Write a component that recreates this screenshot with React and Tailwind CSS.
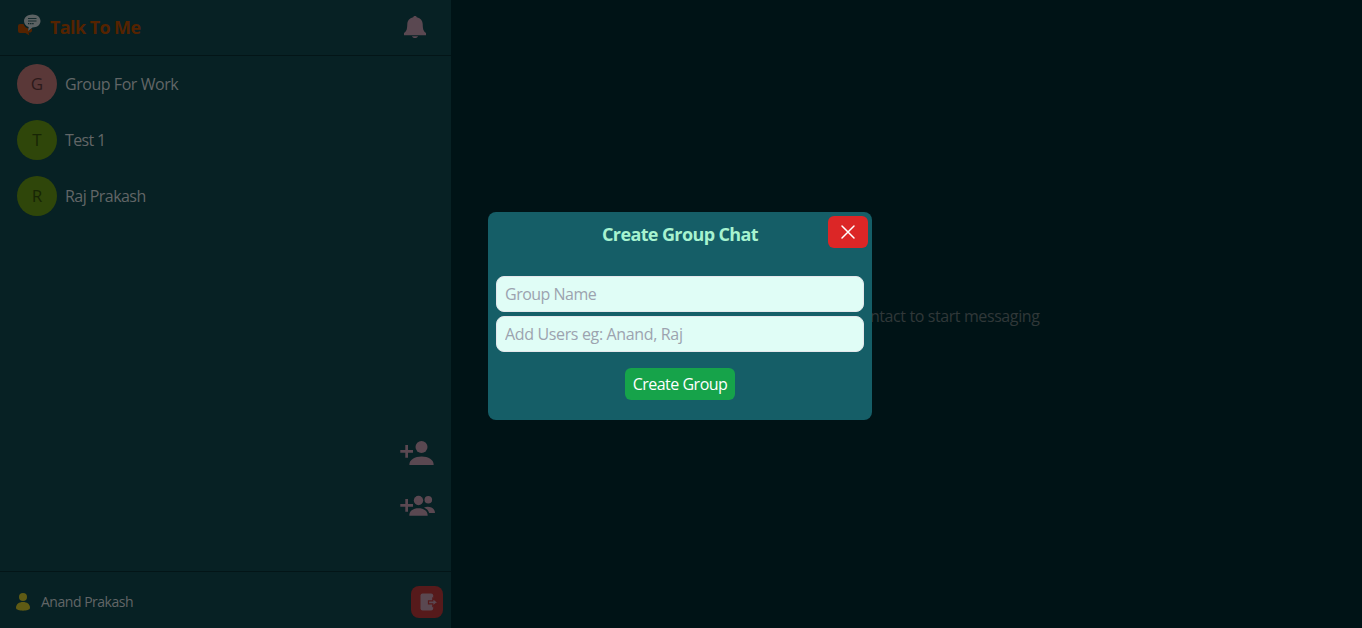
const contacts = [
  { initial: 'G', name: 'Group For Work', tone: 'bg-[#5a3838] text-[#2c1a1b]', tracking: 'tracking-[-0.45px]' },
  { initial: 'T', name: 'Test 1', tone: 'bg-[#2f460a] text-[#172505]', tracking: 'tracking-[-0.65px]' },
  { initial: 'R', name: 'Raj Prakash', tone: 'bg-[#2f460a] text-[#172505]', tracking: 'tracking-[-0.55px]' },
];

function LogoIcon() {
  return (
    <svg className="h-6 w-6" viewBox="0 0 24 24">
      <path d="M3 10h3.500q1.500 4 5 4.500l-.5 2.500 4-2.500v2q0 1.500-1.500 2h-2l.8 3L8.500 19H3q-2 0-2-2v-5q0-2 2-2z" fill="#552300" />
      <path d="M15.500.5c4.700 0 8 2.800 8 6.500s-3.300 6.500-8 6.500L11 17l.7-3.900C9 12.300 7 10 7 7 7 3.300 10.800.5 15.500.5z" fill="#5c6263" />
      <path d="M11 4.500h8.500M11 7h8.500" stroke="#0b2427" strokeWidth=".9" />
      <path d="M11 9.700h6" stroke="#0b2427" strokeWidth="1.200" strokeDasharray="1.400 .7" />
    </svg>
  );
}

function BellIcon() {
  return (
    <svg className="h-6 w-6" viewBox="0 0 24 24" fill="#5a4851">
      <path d="M12 1c1 0 1.500.5 1.800 1.200C17.800 3 19.500 6 19.700 9c.2 5 .5 7 3.300 9v2.200H1V18c2.800-2 3.100-4 3.300-9C4.500 6 6.200 3 10.200 2.200 10.500 1.500 11 1 12 1zM9 21.200h6c-.3 1.200-1.500 1.800-3 1.800s-2.700-.6-3-1.800z" />
    </svg>
  );
}

function AddPersonIcon() {
  return (
    <svg className="h-[26px] w-9" viewBox="0 0 36 26" fill="#5a4851">
      <path d="M5.300 5h2.700v5h5v2.700H8v5H5.300v-5h-5V10h5z" />
      <circle cx="21.500" cy="7" r="6" />
      <path d="M9.300 25c0-5.500 5.500-8.500 12.300-8.500S33.700 19.500 33.700 25z" />
    </svg>
  );
}

function AddGroupIcon() {
  return (
    <svg className="h-6 w-9" viewBox="0 0 36 24" fill="#5a4851">
      <path d="M5.300 5h2.700v5h5v2.700H8v5H5.300v-5h-5V10h5z" />
      <circle cx="18.500" cy="6.500" r="4.700" />
      <circle cx="28.300" cy="5.700" r="3.800" />
      <path d="M9.300 21.700c0-4.700 3.500-7.500 9.200-7.500s9.200 2.800 9.200 7.500zM24 13.500c5-1.800 11 .3 11 5.400h-5.800c-.8-2.500-2.500-4.100-5.200-5.400z" />
    </svg>
  );
}

function LogoutIcon() {
  return (
    <svg className="h-[18px] w-[18px]" viewBox="0 0 18 18">
      <rect x=".500" y=".500" width="12.700" height="17" rx="2" fill="#5a4851" />
      <path d="M8.500 7.800h4.300V5.300L17.500 9.300l-4.700 4v-2.500H8.500z" fill="#5a4851" stroke="#561a1b" strokeWidth="1.200" />
    </svg>
  );
}

export default function App() {
  return (
    <div className="relative flex h-[628px] w-full overflow-hidden bg-[#001316] font-['Open_Sans','Noto_Sans',sans-serif] text-base leading-6">
      <aside className="flex w-[451px] shrink-0 flex-col bg-[#072124] text-[#626667]">
        <header className="flex h-14 shrink-0 items-center justify-between border-b border-[#031517] pr-6 pb-0.5 pl-[17px]">
          <div className="flex items-center gap-[9px]">
            <div className="-mt-0.5"><LogoIcon /></div>
            <h1 className="text-[18px] leading-7 font-bold tracking-[-0.6px] text-[#552300]">Talk To Me</h1>
          </div>
          <BellIcon />
        </header>
        <nav className="flex flex-1 flex-col">
          {contacts.map((contact) => (
            <div key={contact.name} className="flex h-14 items-center gap-2 px-[17px]">
              <span className={`flex h-10 w-10 items-center justify-center rounded-full text-[17px] font-medium ${contact.tone}`}>{contact.initial}</span>
              <span className={contact.tracking}>{contact.name}</span>
            </div>
          ))}
          <div className="mt-auto mb-[53px] flex flex-col items-end gap-[28px] pr-[15px]">
            <AddPersonIcon />
            <AddGroupIcon />
          </div>
        </nav>
        <footer className="flex h-[57px] shrink-0 items-center justify-between border-t border-[#031517] pt-1 pr-2 pl-4">
          <div className="flex items-center gap-[11px]">
            <svg className="h-[18px] w-[14px]" viewBox="0 0 14 18" fill="#5f5b14">
              <circle cx="7" cy="4" r="4" />
              <path d="M0 15c0-4 3-6 7-6s7 2 7 6c0 3.500-14 3.500-14 0z" />
            </svg>
            <span className="text-sm leading-5 tracking-[-0.48px]">Anand Prakash</span>
          </div>
          <button className="flex h-8 w-8 items-center justify-center rounded-lg bg-[#561a1b] pl-1"><LogoutIcon /></button>
        </footer>
      </aside>
      <main className="flex flex-1 items-center justify-center pt-1 text-[#303839]">
        <p className="flex w-[266px] justify-end whitespace-nowrap tracking-[-0.4px]">Click on a contact to start messaging</p>
      </main>
      <section className="absolute top-[212px] left-[488px] flex h-[208px] w-96 flex-col items-center rounded-lg bg-[#155e67] px-2 pt-16">
        <h2 className="absolute top-2 text-[18px] leading-7 font-bold tracking-[-0.62px] text-[#a7f3d0]">Create Group Chat</h2>
        <button className="absolute top-1 right-1 flex h-8 w-10 items-center justify-center rounded-md bg-[#dc2626]">
          <svg className="h-4 w-4" viewBox="0 0 16 16" stroke="white" strokeWidth="1.500" strokeLinecap="round"><path d="M2 2l12 12M14 2L2 14" /></svg>
        </button>
        <input className="h-9 w-full shrink-0 rounded-lg border border-gray-200 bg-[#e0fdf6] px-2 tracking-[-0.5px] outline-none placeholder:text-[#9ca3af]" placeholder="Group Name" />
        <input className="mt-1 h-9 w-full shrink-0 rounded-lg border border-gray-200 bg-[#e0fdf6] px-2 tracking-[-0.35px] outline-none placeholder:text-[#9ca3af]" placeholder="Add Users eg: Anand, Raj" />
        <button className="mt-4 h-8 w-[110px] rounded-md bg-[#16a34a] tracking-[-0.5px] whitespace-nowrap text-white">Create Group</button>
      </section>
    </div>
  );
}
